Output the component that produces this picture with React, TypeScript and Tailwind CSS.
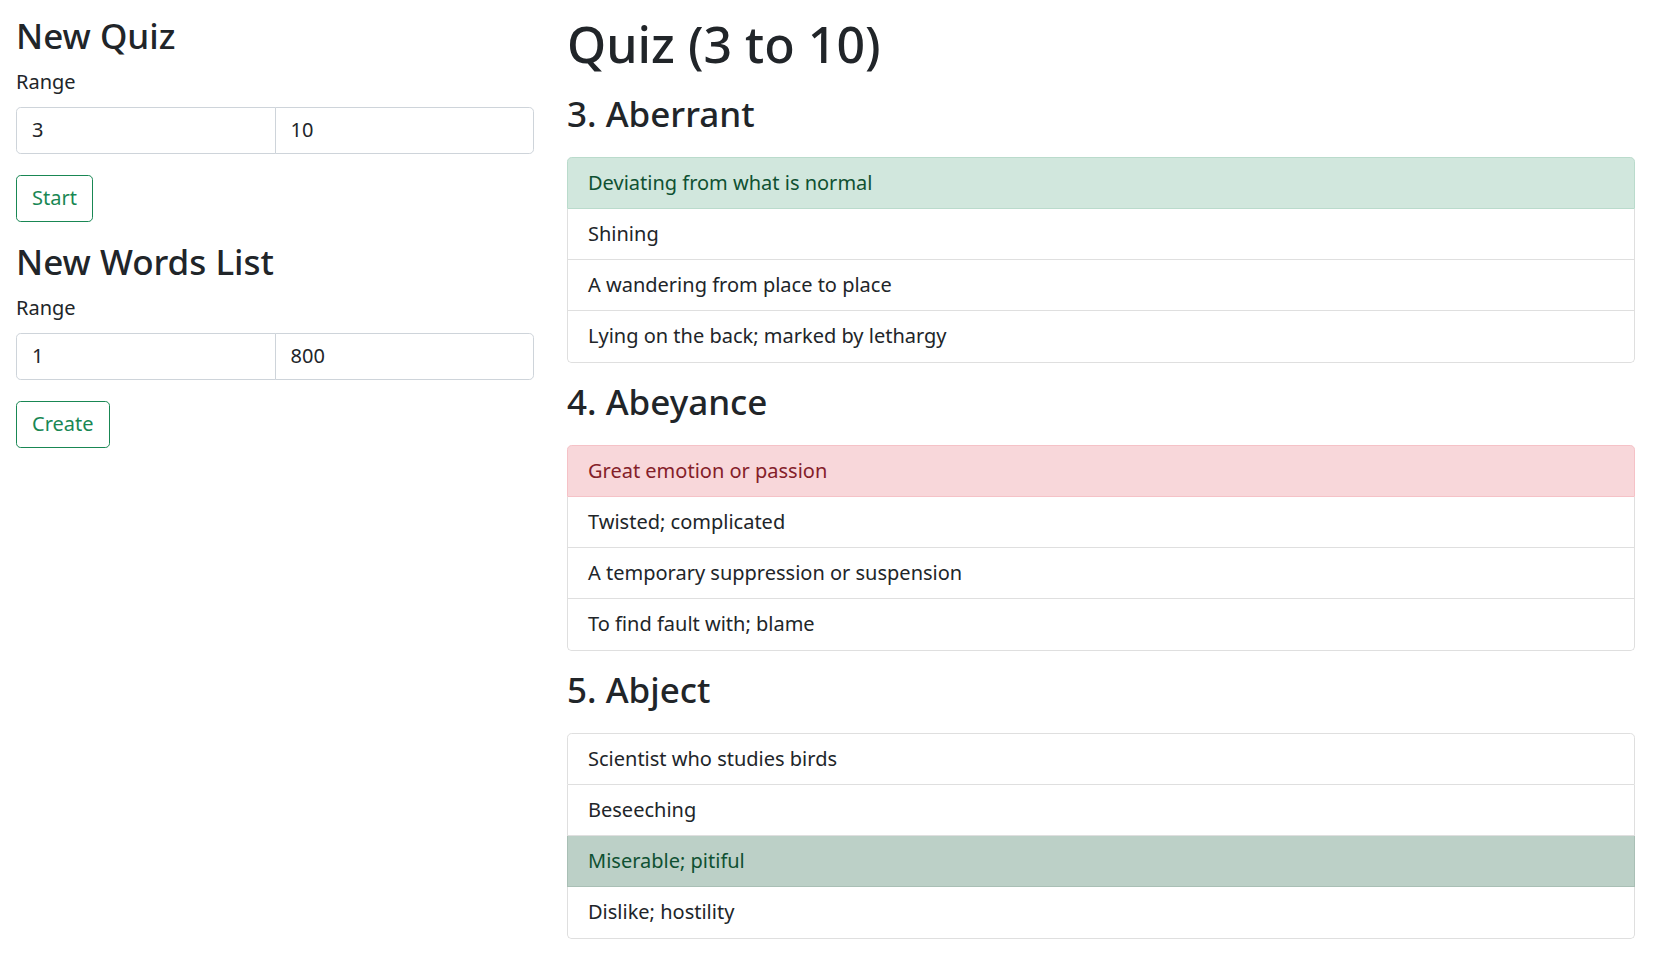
import React from "react";

type Item = { text: string; variant?: "success" | "danger" | "successHover" };

const questions: { title: string; items: Item[] }[] = [
  {
    title: "3. Aberrant",
    items: [
      { text: "Deviating from what is normal", variant: "success" },
      { text: "Shining" },
      { text: "A wandering from place to place" },
      { text: "Lying on the back; marked by lethargy" },
    ],
  },
  {
    title: "4. Abeyance",
    items: [
      { text: "Great emotion or passion", variant: "danger" },
      { text: "Twisted; complicated" },
      { text: "A temporary suppression or suspension" },
      { text: "To find fault with; blame" },
    ],
  },
  {
    title: "5. Abject",
    items: [
      { text: "Scientist who studies birds" },
      { text: "Beseeching" },
      { text: "Miserable; pitiful", variant: "successHover" },
      { text: "Dislike; hostility" },
    ],
  },
];

function itemClass(v: Item["variant"], first: boolean, last: boolean) {
  let base = "px-[20px] py-[10.125px] text-[20px] leading-[30px] border-x border-b ";
  if (first) base += "border-t rounded-t-[4.7px] ";
  if (last) base += "rounded-b-[4.7px] ";
  if (v === "success") return base + "bg-[#d1e7dd] text-[#0f5132] border-[#badbcc]";
  if (v === "danger") return base + "bg-[#f8d7da] text-[#842029] border-[#f5c2c7]";
  if (v === "successHover") return base + "bg-[#bcd0c7] text-[#0f5132] border-[#a9bfb5]";
  return base + "bg-white text-[#212529] border-[#dfdfdf]";
}

function RangeForm({ a, b, button }: { a: string; b: string; button: string }) {
  return (
    <div>
      <label className="block text-[20px] leading-[30px] mb-[10px]">Range</label>
      <div className="flex mb-[20.5px]">
        <input
          readOnly
          value={a}
          className="w-1/2 min-w-0 px-[15px] py-[7.75px] text-[20px] leading-[30px] text-[#212529] border border-[#ced4da] rounded-l-[4.7px] outline-none bg-white"
        />
        <input
          readOnly
          value={b}
          className="w-1/2 min-w-0 -ml-px px-[15px] py-[7.75px] text-[20px] leading-[30px] text-[#212529] border border-[#ced4da] rounded-r-[4.7px] outline-none bg-white"
        />
      </div>
      <button className="px-[15px] py-[7.75px] text-[20px] leading-[30px] text-[#198754] border border-[#198754] rounded-[4.7px] bg-white">
        {button}
      </button>
    </div>
  );
}

export default function App() {
  return (
    <div
      className="flex gap-[32px] pl-[16px] pr-[21px] pt-[13.5px] pb-[16px] bg-white text-[#212529] min-h-screen"
      style={{ fontFamily: '"Noto Sans", "Liberation Sans", sans-serif' }}
    >
      <div className="w-[519px] shrink-0 pt-[1px]">
        <h3 className="text-[35px] leading-[1.2] font-medium mb-[10px]">New Quiz</h3>
        <RangeForm a="3" b="10" button="Start" />
        <h3 className="text-[35px] leading-[1.2] font-medium mb-[10px] mt-[18.5px]">New Words List</h3>
        <RangeForm a="1" b="800" button="Create" />
      </div>
      <div className="flex-1 min-w-0">
        <h1 className="text-[50px] leading-[1.2] font-medium mb-[19px]">Quiz (3 to 10)</h1>
        {questions.map((q) => (
          <div key={q.title} className="mb-[18px]">
            <h3 className="text-[35px] leading-[1.2] font-medium mb-[22px]">{q.title}</h3>
            <div className="flex flex-col">
              {q.items.map((it, i) => (
                <div key={it.text} className={itemClass(it.variant, i === 0, i === q.items.length - 1)}>
                  {it.text}
                </div>
              ))}
            </div>
          </div>
        ))}
      </div>
    </div>
  );
}
